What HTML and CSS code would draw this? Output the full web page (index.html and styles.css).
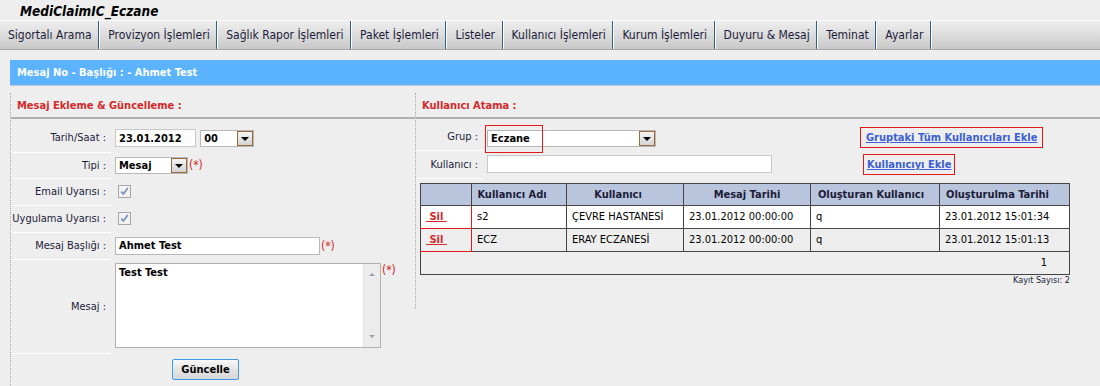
FILE: index.html
```html
<!DOCTYPE html>
<html lang="tr">
<head>
<meta charset="utf-8">
<title>MediClaimIC_Eczane</title>
<link rel="stylesheet" href="styles.css">
</head>
<body>
<div class="title">MediClaimIC_Eczane</div>
<nav class="menu">
  <a class="mi">Sigortalı Arama</a>
  <a class="mi">Provizyon İşlemleri</a>
  <a class="mi">Sağlık Rapor İşlemleri</a>
  <a class="mi">Paket İşlemleri</a>
  <a class="mi">Listeler</a>
  <a class="mi">Kullanıcı İşlemleri</a>
  <a class="mi">Kurum İşlemleri</a>
  <a class="mi">Duyuru &amp; Mesaj</a>
  <a class="mi">Teminat</a>
  <a class="mi">Ayarlar</a>
</nav>
<div class="content">
  <div class="bar">Mesaj No - Başlığı : - Ahmet Test</div>
  <div class="panels">
    <section class="left">
      <h2 class="ph">Mesaj Ekleme &amp; Güncelleme :</h2>
      <table class="form">
        <tr class="r1">
          <td class="lbl">Tarih/Saat :</td>
          <td class="fld">
            <span class="inp w-date">23.01.2012</span>
            <span class="sel w-hour"><span class="sv">00</span><span class="arr"></span></span>
          </td>
        </tr>
        <tr class="r2">
          <td class="lbl">Tipi :</td>
          <td class="fld"><span class="sel w-tip"><span class="sv">Mesaj</span><span class="arr"></span></span><span class="req">(*)</span></td>
        </tr>
        <tr>
          <td class="lbl">Email Uyarısı :</td>
          <td class="fld"><span class="cb"><svg width="13" height="13" viewBox="0 0 13 13"><rect x="0.5" y="0.5" width="12" height="12" fill="#f2f2f2" stroke="#a8a8a8"/><path d="M3.3 6.6 L5.4 9 L9.8 3" fill="none" stroke="#6f8fb8" stroke-width="1.6"/></svg></span></td>
        </tr>
        <tr>
          <td class="lbl">Uygulama Uyarısı :</td>
          <td class="fld"><span class="cb"><svg width="13" height="13" viewBox="0 0 13 13"><rect x="0.5" y="0.5" width="12" height="12" fill="#f2f2f2" stroke="#a8a8a8"/><path d="M3.3 6.6 L5.4 9 L9.8 3" fill="none" stroke="#6f8fb8" stroke-width="1.6"/></svg></span></td>
        </tr>
        <tr>
          <td class="lbl">Mesaj Başlığı :</td>
          <td class="fld"><span class="inp w-title">Ahmet Test</span><span class="req">(*)</span></td>
        </tr>
        <tr class="rmsg">
          <td class="lbl">Mesaj :</td>
          <td class="fld top">
            <span class="ta"><span class="tat">Test Test</span><span class="sb"><span class="up"></span><span class="dn"></span></span></span><span class="req rq-ta">(*)</span>
          </td>
        </tr>
      </table>
      <div class="btnrow"><button class="btn">Güncelle</button></div>
    </section>
    <section class="right">
      <h2 class="ph">Kullanıcı Atama :</h2>
      <div class="assign">
        <table class="form rform">
          <tr class="rg">
            <td class="lbl">Grup :</td>
            <td class="fld"><span class="hl-wrap"><span class="sel w-grup"><span class="sv">Eczane</span><span class="arr"></span></span><span class="hl"></span></span></td>
          </tr>
          <tr class="ru">
            <td class="lbl">Kullanıcı :</td>
            <td class="fld"><span class="inp w-user"></span></td>
          </tr>
        </table>
        <div class="links">
          <a class="lnk l1">Gruptaki Tüm Kullanıcıları Ekle</a>
          <a class="lnk l2">Kullanıcıyı Ekle</a>
        </div>
      </div>
      <table class="grid">
        <colgroup>
          <col style="width:51px"><col style="width:95px"><col style="width:117px"><col style="width:127px"><col style="width:129px"><col style="width:130px">
        </colgroup>
        <thead>
          <tr><th></th><th class="sh">Kullanıcı Adı</th><th class="sh">Kullanıcı</th><th>Mesaj Tarihi</th><th class="sh2">Oluşturan Kullanıcı</th><th class="sh">Oluşturulma Tarihi</th></tr>
        </thead>
        <tbody>
          <tr class="odd"><td class="del"><a class="sil">&nbsp;Sil&nbsp;</a></td><td>s2</td><td>ÇEVRE HASTANESİ</td><td>23.01.2012 00:00:00</td><td>q</td><td>23.01.2012 15:01:34</td></tr>
          <tr class="even"><td class="del"><a class="sil">&nbsp;Sil&nbsp;</a></td><td>ECZ</td><td>ERAY ECZANESİ</td><td>23.01.2012 00:00:00</td><td>q</td><td>23.01.2012 15:01:13</td></tr>
          <tr class="pager"><td colspan="6">1</td></tr>
        </tbody>
      </table>
      <div class="count">Kayıt Sayısı: 2</div>
    </section>
  </div>
</div>
</body>
</html>
```
FILE: styles.css
```css
* { box-sizing: border-box; }
html, body { margin: 0; padding: 0; }
body {
  background: #eeeeee;
  font-family: "DejaVu Sans Condensed", "DejaVu Sans", sans-serif;
  font-size: 11px;
  color: #1c1c3a;
  width: 1100px;
  height: 386px;
  overflow: hidden;
}
.title {
  height: 20px;
  padding: 3px 0 0 20px;
  font-weight: bold;
  font-style: italic;
  font-size: 13.5px;
  color: #000;
  line-height: 16px;
}
.menu {
  display: flex;
  height: 30px;
  border-top: 1px solid #fafafa;
  border-bottom: 1px solid #a8a8a8;
  background: linear-gradient(#eeeeee, #dadada 55%, #c8c8c8);
}
.mi {
  display: flex;
  align-items: center;
  padding: 0 6.6px 0 8px;
  border-right: 1px solid #2e5f94;
  box-shadow: 1px 0 0 #ffffff;
  margin-right: 1px;
  color: #1c1c3a;
  font-size: 12px;
  white-space: nowrap;
}
.content { padding: 10px 0 0 10px; }
.bar {
  height: 26px;
  background: #5cb3ff;
  color: #fff;
  font-weight: bold;
  padding: 0 0 0 7px;
  line-height: 25px;
  border-bottom: 1px solid #b8c8d8;
}
.panels { display: flex; align-items: flex-start; margin-top: 7px; }
.left {
  width: 405px;
  height: 300px;
  border-left: 1px dotted #a8a8a8;
}
.right {
  flex: 1;
  min-height: 216px;
  border-left: 1px dotted #a8a8a8;
}
.ph {
  margin: 0;
  height: 26px;
  padding: 6px 0 0 6px;
  font-size: 11px;
  font-weight: bold;
  color: #d42a2a;
  border-bottom: 2px solid #b0b0b0;
}
.form { border-collapse: collapse; margin-top: 5px; }
.form td { padding: 0; height: 27px; }
.form .r1 td { height: 28px; }
.form .r2 td { height: 26px; }
.lbl {
  width: 100px;
  text-align: right;
  padding-right: 5px !important;
  border-bottom: 1px solid #ffffff;
  white-space: nowrap;
}
.fld { padding-left: 4px !important; white-space: nowrap; }
.fld.top { vertical-align: top; padding-top: 4px !important; }
.form .rmsg td { height: 94px; }
.inp, .sel {
  display: inline-flex;
  align-items: center;
  vertical-align: middle;
  height: 18px;
  background: #fff;
  border: 1px solid #b8b8b8;
  font-weight: bold;
  font-size: 11px;
  color: #000;
  padding-left: 3px;
}
.sel { height: 17px; }
.w-date { width: 81px; margin-right: 1px; border-color: #c8c8c8; }
.w-hour { width: 54px; }
.w-tip { width: 73px; }
.w-title { width: 205px; }
.w-grup { width: 169px; }
.w-user { width: 285px; border-color: #c8c8c8; }
.sel { justify-content: space-between; padding-right: 0; }
.arr {
  width: 16px;
  height: 15px;
  border: 1px solid #9a6a3a;
  background: linear-gradient(#f4f4f4, #d4d4d4);
  position: relative;
}
.arr::after {
  content: "";
  position: absolute;
  left: 3px; top: 5px;
  border-left: 4px solid transparent;
  border-right: 4px solid transparent;
  border-top: 4px solid #000;
}
.req { color: #d42a2a; font-size: 12px; vertical-align: middle; margin-left: 1px; }
.rq-ta { vertical-align: top; }
.cb { display: inline-block; vertical-align: middle; margin-left: 3px; line-height: 0; }
.ta {
  display: inline-flex;
  vertical-align: top;
  width: 266px;
  height: 85px;
  background: #fff;
  border: 1px solid #b0b0b0;
}
.tat { flex: 1; font-weight: bold; font-size: 11px; color: #000; padding: 2px 3px; }
.sb {
  width: 17px;
  background: #ececec;
  border-left: 1px solid #e0e0e0;
  display: flex;
  flex-direction: column;
  justify-content: space-between;
  align-items: center;
  padding: 9px 0 9px;
}
.up { border-left: 3px solid transparent; border-right: 3px solid transparent; border-bottom: 3px solid #a0a0a0; }
.dn { border-left: 3px solid transparent; border-right: 3px solid transparent; border-top: 3px solid #a0a0a0; }
.btnrow { padding: 5px 0 0 161px; }
.btn {
  width: 67px;
  height: 21px;
  font-family: inherit;
  font-weight: bold;
  font-size: 11px;
  color: #000;
  border: 1px solid #3c98e8;
  border-radius: 2px;
  background: linear-gradient(#f8f8f8, #e4e4e4 50%, #d8d8d8);
  padding: 0;
}
.assign { display: flex; }
.rform { margin-top: 5px; }
.rform .lbl { width: 67px; padding-right: 5px !important; }
.form.rform .rg td { height: 26px; }
.form.rform .rg .fld { padding-top: 3px !important; }
.form.rform .ru td { height: 28px; }
.hl-wrap { position: relative; display: inline-block; vertical-align: middle; }
.hl {
  position: absolute;
  left: -2px; top: -5px;
  width: 58px; height: 28px;
  border: 1px solid #e21a1a;
}
.links {
  display: flex;
  flex-direction: column;
  align-items: flex-start;
  margin: 8px 0 0 88px;
}
.lnk {
  color: #3a5fd6;
  font-weight: bold;
  text-decoration: underline;
  border: 1px solid #e21a1a;
  padding: 3px 5px 3px 5px;
  font-size: 11px;
}
.l2 { margin: 6px 0 0 3px; padding: 3px 3px; }
.grid {
  margin: 4px 0 0 4px;
  width: 650px;
  border-collapse: collapse;
  table-layout: fixed;
  border: 1px solid #444;
}
.grid th {
  background: #b9c5dc;
  height: 22px;
  font-weight: bold;
  border: 1px solid #444;
  text-align: center;
  white-space: nowrap;
  padding: 0;
}
.grid th.sh { padding-right: 14px; }
.grid th.sh2 { padding-right: 8px; }
.grid td {
  height: 23px;
  border: 1px solid #444;
  padding: 0 5px;
  white-space: nowrap;
  color: #000;
}
.grid .odd td { background: #fff; }
.grid .even td { background: #eeeeee; }
.grid td.del { border-right-color: #e21a1a; border-bottom-color: #e21a1a; padding: 0 0 0 5px; }
.sil { color: #d42a2a; font-weight: bold; text-decoration: underline; }
.grid .pager td { text-align: right; padding-right: 22px; background: #eeeeee; }
.count {
  width: 654px;
  text-align: right;
  font-size: 9px;
  padding-top: 0;
  color: #1c1c3a;
}
```
